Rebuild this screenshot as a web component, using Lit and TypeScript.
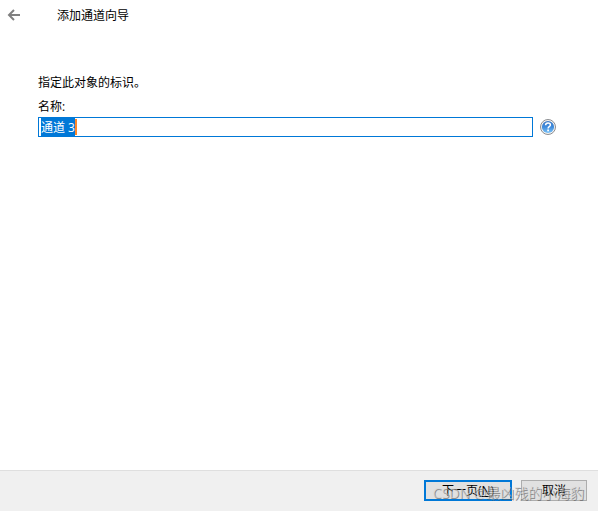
import { LitElement, html, css } from "lit";
import { customElement, query, state } from "lit/decorators.js";

@customElement("help-icon")
class HelpIcon extends LitElement {
  static styles = css`
    :host {
      display: block;
      width: 16px;
      height: 16px;
    }
    .glyph {
      display: block;
    }
  `;

  render() {
    return html`
      <svg class="glyph" width="16" height="16" viewBox="0 0 16 16" aria-hidden="true">
        <defs>
          <linearGradient id="ball" x1="0" y1="0" x2="0" y2="1">
            <stop offset="0" stop-color="#3a78c6" />
            <stop offset="0.5" stop-color="#3f8bdc" />
            <stop offset="1" stop-color="#7cc4f8" />
          </linearGradient>
        </defs>
        <circle cx="8" cy="8" r="7.5" fill="#f6f4f2" stroke="#8b8d91" stroke-width="1" />
        <circle cx="8" cy="8" r="6.1" fill="url(#ball)" />
        <path
          d="M5.6 6.3C5.6 4.7 6.6 4 8 4s2.4.8 2.4 2.1c0 1.6-2.3 1.5-2.3 3.3"
          fill="none"
          stroke="#fff"
          stroke-width="1.5"
        />
        <rect x="7.2" y="10.5" width="1.8" height="1.8" fill="#fff" />
      </svg>
    `;
  }
}

@customElement("app-root")
class AppRoot extends LitElement {
  static styles = css`
    :host {
      display: flex;
      flex-direction: column;
      min-height: 100vh;
      background: #fff;
      color: #000;
      font: 12px/16px "Open Sans", "Noto Sans CJK SC", sans-serif;
    }
    .header {
      display: flex;
      align-items: flex-start;
      gap: 36px;
      padding: 8px 7px;
    }
    .back {
      display: block;
      width: 14px;
      height: 14px;
      padding: 0;
      border: 0;
      background: none;
    }
    .arrow {
      display: block;
    }
    .title {
      margin: 0;
      font: inherit;
    }
    .content {
      flex: 1;
      display: flex;
      flex-direction: column;
      gap: 8px;
      padding: 43px 42px 0 38px;
    }
    .intro {
      margin: 0;
    }
    .field {
      display: flex;
      flex-direction: column;
      gap: 2px;
    }
    .row {
      display: flex;
      align-items: center;
      gap: 7px;
    }
    .box {
      position: relative;
      flex: 1;
      display: flex;
    }
    .name {
      flex: 1;
      min-width: 0;
      height: 20px;
      box-sizing: border-box;
      padding: 1px 2px;
      border: 1px solid #0078d7;
      border-radius: 0;
      outline: none;
      background: #fff;
      color: #000;
      font: inherit;
    }
    .name::selection {
      background: #0078d7;
      color: #fff;
    }
    .caret {
      position: absolute;
      left: 37px;
      top: 2px;
      width: 2px;
      height: 16px;
      background: #ff8728;
      pointer-events: none;
    }
    .help {
      padding: 0;
      border: 0;
      background: none;
    }
    .footer {
      position: relative;
      display: flex;
      justify-content: flex-end;
      gap: 9px;
      padding: 9px 11px 10px;
      border-top: 1px solid #dfdfdf;
      background: #f0f0f0;
    }
    .button {
      height: 21px;
      min-width: 66px;
      box-sizing: border-box;
      padding: 0 15px;
      border: 1px solid #adadad;
      border-radius: 0;
      background: #e1e1e1;
      color: #000;
      font: inherit;
      line-height: 17px;
    }
    .primary {
      min-width: 88px;
      border: 2px solid #0078d7;
    }
    .watermark {
      position: absolute;
      right: 14px;
      bottom: 8px;
      color: rgba(215, 215, 215, 0.5);
      font-size: 14px;
      line-height: 20px;
      white-space: nowrap;
      text-shadow: 1px 1px 0 rgba(90, 90, 90, 0.6);
      pointer-events: none;
    }
  `;

  @state() private name = "通道 3";
  @state() private caretVisible = true;
  @query(".name") private input!: HTMLInputElement;

  firstUpdated() {
    this.input.focus();
    this.input.select();
  }

  private onInput() {
    this.name = this.input.value;
    this.caretVisible = false;
  }

  render() {
    return html`
      <header class="header">
        <button class="back" aria-label="返回">
          <svg class="arrow" width="14" height="14" viewBox="0 0 14 14" aria-hidden="true">
            <path d="M13 7H2M7 2L2 7l5 5" fill="none" stroke="#808080" stroke-width="2" />
          </svg>
        </button>
        <h1 class="title">添加通道向导</h1>
      </header>
      <main class="content">
        <p class="intro">指定此对象的标识。</p>
        <div class="field">
          <label for="name">名称:</label>
          <div class="row">
            <div class="box">
              <input
                id="name"
                class="name"
                type="text"
                autocomplete="off"
                .value=${this.name}
                @input=${this.onInput}
              />
              ${this.caretVisible ? html`<span class="caret"></span>` : null}
            </div>
            <button class="help" aria-label="帮助"><help-icon></help-icon></button>
          </div>
        </div>
      </main>
      <footer class="footer">
        <button class="button primary">下一页(<u>N</u>)</button>
        <button class="button">取消</button>
        <span class="watermark">CSDN @最凶残的小海豹</span>
      </footer>
    `;
  }
}
